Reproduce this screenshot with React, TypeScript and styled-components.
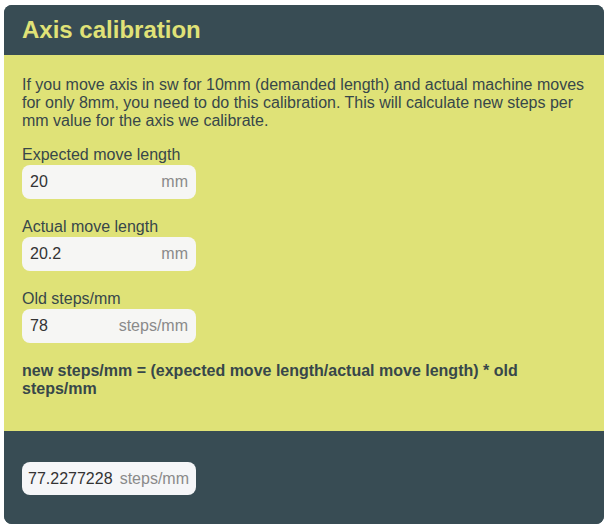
import React from "react";
import styled, { createGlobalStyle } from "styled-components";

const GlobalStyle = createGlobalStyle`
  body {
    margin: 0;
    background: #ffffff;
    font-family: "Liberation Sans", Arial, sans-serif;
  }
`;

type FieldProps = {
  label?: string;
  value: string;
  unit: string;
};

const Field = ({ label, value, unit }: FieldProps) => (
  <FieldGroup>
    {label && <Label>{label}</Label>}
    <InputBox>
      <Value>{value}</Value>
      <Unit>{unit}</Unit>
    </InputBox>
  </FieldGroup>
);

const App = () => {
  const expected = 20;
  const actual = 20.2;
  const oldSteps = 78;
  const result = ((expected / actual) * oldSteps).toFixed(7);

  return (
    <>
      <GlobalStyle />
      <Card>
        <Header>
          <Title>Axis calibration</Title>
        </Header>
        <Body>
          <Intro>
            If you move axis in sw for 10mm (demanded length) and actual machine
            moves for only 8mm, you need to do this calibration. This will
            calculate new steps per mm value for the axis we calibrate.
          </Intro>
          <Field label="Expected move length" value="20" unit="mm" />
          <Field label="Actual move length" value="20.2" unit="mm" />
          <Field label="Old steps/mm" value="78" unit="steps/mm" />
          <Formula>
            new steps/mm = (expected move length/actual move length) * old
            steps/mm
          </Formula>
        </Body>
        <Footer>
          <ResultBox>
            <Value>{result}</Value>
            <Unit>steps/mm</Unit>
          </ResultBox>
        </Footer>
      </Card>
    </>
  );
};

export default App;

const Card = styled.section`
  margin: 5px 0 0 4px;
  width: 600px;
  height: 519px;
  border-radius: 8px;
  overflow: hidden;
  display: flex;
  flex-direction: column;
  background: #384c54;
`;

const Header = styled.header`
  height: 50px;
  padding: 0 18px;
  display: flex;
  align-items: center;
  background: #384c54;
`;

const Title = styled.h1`
  margin: 0;
  font-size: 24px;
  font-weight: bold;
  color: #e0e277;
`;

const Body = styled.div`
  background: #dfe277;
  padding: 21px 18px 0;
  height: 376px;
  box-sizing: border-box;
  color: #37474a;
`;

const Intro = styled.p`
  margin: 0 0 16px;
  font-size: 16px;
  line-height: 18px;
`;

const FieldGroup = styled.div`
  margin-bottom: 19px;
`;

const Label = styled.div`
  font-size: 16px;
  line-height: 18px;
  margin-bottom: 1px;
`;

const InputBox = styled.div`
  width: 174px;
  height: 34px;
  box-sizing: border-box;
  padding: 0 8px;
  border-radius: 8px;
  background: #f6f6f4;
  display: flex;
  align-items: center;
  justify-content: space-between;
  font-size: 16px;
`;

const Value = styled.span`
  color: #333333;
`;

const Unit = styled.span`
  color: #8a8a8a;
`;

const Formula = styled.p`
  margin: 10px 0 0;
  font-size: 16px;
  line-height: 18px;
  font-weight: bold;
  color: #37474a;
`;

const Footer = styled.div`
  flex: 1;
  padding: 31px 18px 0;
  background: #384c54;
`;

const ResultBox = styled(InputBox)`
  height: 33px;
  padding: 0 7px 0 6px;
  background: #f5f6f8;
`;
